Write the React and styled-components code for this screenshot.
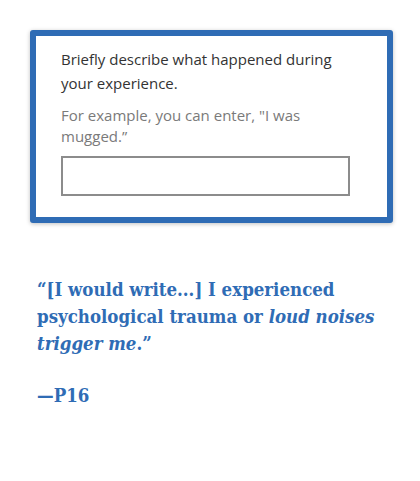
import React from "react";
import styled, { createGlobalStyle } from "styled-components";

const Global = createGlobalStyle`
  html, body { margin: 0; padding: 0; background: #ffffff; }
  body { width: 420px; height: 481px; overflow: hidden; }
`;

const Page = styled.div`
  display: flex;
  flex-direction: column;
  padding: 30px 27px 0 30px;
`;

const Card = styled.div`
  border: 6px solid #2f6cb5;
  border-radius: 3px;
  background: #fff;
  box-shadow: 0 1px 4px rgba(0, 0, 0, 0.25);
  padding: 11px 37px 21px 25px;
  display: flex;
  flex-direction: column;
`;

const Label = styled.div`
  font-family: "Open Sans", sans-serif;
  font-size: 15px;
  line-height: 24px;
  color: #333;
`;

const Hint = styled.div`
  font-family: "Open Sans", sans-serif;
  font-size: 15px;
  line-height: 21px;
  color: #7a7a7a;
  margin-top: 10px;
`;

const Input = styled.div`
  height: 36px;
  border: 2px solid #8c8c8c;
  margin-top: 9px;
`;

const QuoteText = styled.div`
  font-family: "DejaVu Serif Condensed", "DejaVu Serif", serif;
  font-stretch: condensed;
  font-weight: bold;
  font-size: 18.5px;
  line-height: 27px;
  color: #2f6cb5;
`;

const Quote = styled(QuoteText).attrs({ as: "blockquote" })`
  margin: 53px 0 0 7px;
`;

const Em = styled.em`
  font-style: italic;
`;

const Attribution = styled(QuoteText)`
  margin: 25px 0 0 7px;
`;

export default function App() {
  return (
    <>
      <Global />
      <Page>
        <Card>
          <Label>
            Briefly describe what happened during
            <br />
            your experience.
          </Label>
          <Hint>
            For example, you can enter, "I was
            <br />
            mugged.”
          </Hint>
          <Input />
        </Card>
        <Quote>
          “[I would write...] I experienced
          <br />
          psychological trauma or <Em>loud noises</Em>
          <br />
          <Em>trigger me</Em>.”
        </Quote>
        <Attribution>—P16</Attribution>
      </Page>
    </>
  );
}
